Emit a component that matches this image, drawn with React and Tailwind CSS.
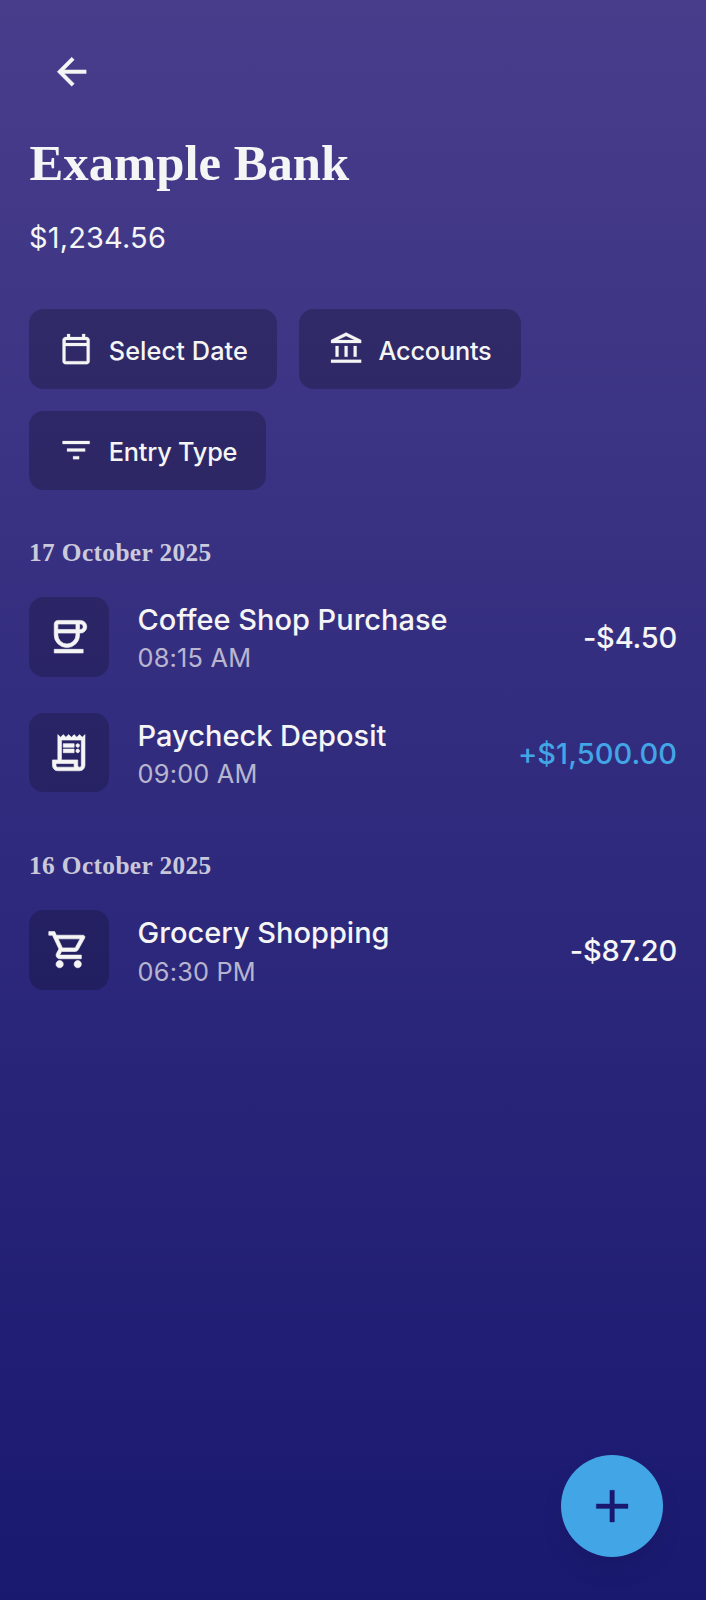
const ICONS = {
  back: "m313-440 224 224-57 56-320-320 320-320 57 56-224 224h487v80H313Z",
  calendar:
    "M200-80q-33 0-56.5-23.5T120-160v-560q0-33 23.5-56.5T200-800h40v-80h80v80h320v-80h80v80h40q33 0 56.5 23.5T840-720v560q0 33-23.5 56.5T760-80H200Zm0-80h560v-400H200v400Zm0-480h560v-80H200v80Zm0 0v-80 80Z",
  bank: "M200-280v-280h80v280h-80Zm240 0v-280h80v280h-80ZM80-120v-80h800v80H80Zm600-160v-280h80v280h-80ZM80-640v-80l400-200 400 200v80H80Zm178-80h444L480-830 258-720Z",
  filter: "M400-240v-80h160v80H400ZM240-440v-80h480v80H240ZM120-640v-80h720v80H120Z",
  coffee:
    "M440-240q-117 0-198.5-81.5T160-520v-240q0-33 23.5-56.5T240-840h500q58 0 99 41t41 99q0 58-41 99t-99 41h-20v40q0 117-81.5 198.5T440-240ZM240-640h400v-120H240v120Zm200 320q83 0 141.5-58.5T640-520v-40H240v40q0 83 58.5 141.5T440-320Zm280-320h20q25 0 42.5-17.5T800-700q0-25-17.5-42.5T740-760h-20v120ZM160-120v-80h640v80H160Z",
  receipt:
    "M240-80q-50 0-85-35t-35-85v-120h120v-560l60 60 60-60 60 60 60-60 60 60 60-60 60 60 60-60 60 60 60-60v680q0 50-35 85t-85 35H240Zm480-80q17 0 28.5-11.5T760-200v-560H320v440h360v120q0 17 11.5 28.5T720-160ZM360-600v-80h240v80H360Zm0 120v-80h240v80H360Zm320-120q-17 0-28.5-11.5T640-640q0-17 11.5-28.5T680-680q17 0 28.5 11.5T720-640q0 17-11.5 28.5T680-600Zm0 120q-17 0-28.5-11.5T640-520q0-17 11.5-28.5T680-560q17 0 28.5 11.5T720-520q0 17-11.5 28.5T680-480ZM240-160h360v-80H200v40q0 17 11.5 28.5T240-160Z",
  cart: "M280-80q-33 0-56.5-23.5T200-160q0-33 23.5-56.5T280-240q33 0 56.5 23.5T360-160q0 33-23.5 56.5T280-80Zm400 0q-33 0-56.5-23.5T600-160q0-33 23.5-56.5T680-240q33 0 56.5 23.5T760-160q0 33-23.5 56.5T680-80ZM246-720l96 200h280l110-200H246Zm-38-80h590q23 0 35 20.5t1 41.5L692-482q-11 20-29.5 31T622-440H324l-44 80h480v80H280q-45 0-68-39.5t-2-78.5l54-98-144-304H40v-80h130l38 80Z",
  plus: "M440-440H200v-80h240v-240h80v240h240v80H520v240h-80v-240Z",
};

function Icon({ name, className, weight = 6 }) {
  return (
    <svg
      viewBox="0 -960 960 960"
      fill="currentColor"
      stroke="currentColor"
      strokeWidth={weight}
      className={`shrink-0 ${className}`}
      aria-hidden="true"
    >
      <path d={ICONS[name]} />
    </svg>
  );
}

const FILTERS = [
  { icon: "calendar", label: "Select Date", width: "w-[248px]", tracking: "tracking-[0.1px]" },
  { icon: "bank", label: "Accounts", width: "w-[222px]", tracking: "tracking-[-0.2px]" },
  { icon: "filter", label: "Entry Type", width: "w-[237px]", tracking: "tracking-[-0.2px]" },
];

const GROUPS = [
  {
    date: "17 October 2025",
    entries: [
      { icon: "coffee", name: "Coffee Shop Purchase", time: "08:15 AM", amount: "-$4.50" },
      { icon: "receipt", name: "Paycheck Deposit", time: "09:00 AM", amount: "+$1,500.00", credit: true },
    ],
  },
  {
    date: "16 October 2025",
    entries: [{ icon: "cart", name: "Grocery Shopping", time: "06:30 PM", amount: "-$87.20" }],
  },
];

function Entry({ entry }) {
  return (
    <li className="flex h-[79.6px] items-center">
      <div className="flex size-[79.6px] shrink-0 items-center justify-center rounded-[14.5px] bg-black/20">
        <Icon name={entry.icon} weight={14} className="size-[43.4px]" />
      </div>
      <div className="ml-[29px] flex-1">
        <p className="text-[29px] leading-[43.4px] font-medium">{entry.name}</p>
        <p className="text-[25.3px] leading-[34px] tracking-[0.2px] text-[#f5f5f5]/70">{entry.time}</p>
      </div>
      <p
        className={`pt-[1.5px] text-[29px] leading-[43.4px] font-medium ${
          entry.credit ? "tracking-[0.05px] text-[#42a5e5]" : "tracking-[-0.2px]"
        }`}
      >
        {entry.amount}
      </p>
    </li>
  );
}

export default function App() {
  return (
    <main className="relative h-[1600px] w-full overflow-hidden bg-linear-to-b/srgb from-[#483d8b] to-[#191970] px-[29px] pt-[29px] font-[Inter,sans-serif] text-[#f5f5f5]">
      <button className="flex size-[86px] items-center justify-center" aria-label="Back">
        <Icon name="back" weight={10} className="size-[43.4px]" />
      </button>
      <h1 className="mt-[16px] pl-[0.5px] font-['Liberation_Serif',serif] text-[50.7px] leading-[65px] font-bold">
        Example Bank
      </h1>
      <p className="mt-[20px] text-[29px] leading-[43.4px] tracking-[0.15px]">$1,234.56</p>

      <div className="mt-[50px] flex flex-wrap gap-[21.8px]">
        {FILTERS.map((f) => (
          <button
            key={f.label}
            className={`flex h-[79.4px] items-center gap-[14.5px] rounded-[14.5px] bg-black/22 pl-[29px] text-[25.3px] font-medium whitespace-nowrap ${f.width}`}
          >
            <Icon name={f.icon} className="size-[36.2px]" />
            <span className={`pt-[4px] ${f.tracking}`}>{f.label}</span>
          </button>
        ))}
      </div>

      {GROUPS.map((g) => (
        <section key={g.date} className="mt-[43px] mb-[53.7px]">
          <h2 className="font-['Liberation_Serif',serif] text-[25.3px] leading-[38px] font-bold tracking-[0.4px] text-[#f5f5f5]/80">
            {g.date}
          </h2>
          <ul className="mt-[26px] flex flex-col gap-[36.2px]">
            {g.entries.map((e) => (
              <Entry key={e.name} entry={e} />
            ))}
          </ul>
        </section>
      ))}

      <button
        aria-label="Add entry"
        className="absolute right-[43.4px] bottom-[43.4px] flex size-[101.4px] items-center justify-center rounded-full bg-[#42a5e5] text-[#191970] shadow-[0_14px_27px_-2px_rgba(0,0,0,0.08)]"
      >
        <Icon name="plus" className="size-[54.3px]" />
      </button>
    </main>
  );
}
